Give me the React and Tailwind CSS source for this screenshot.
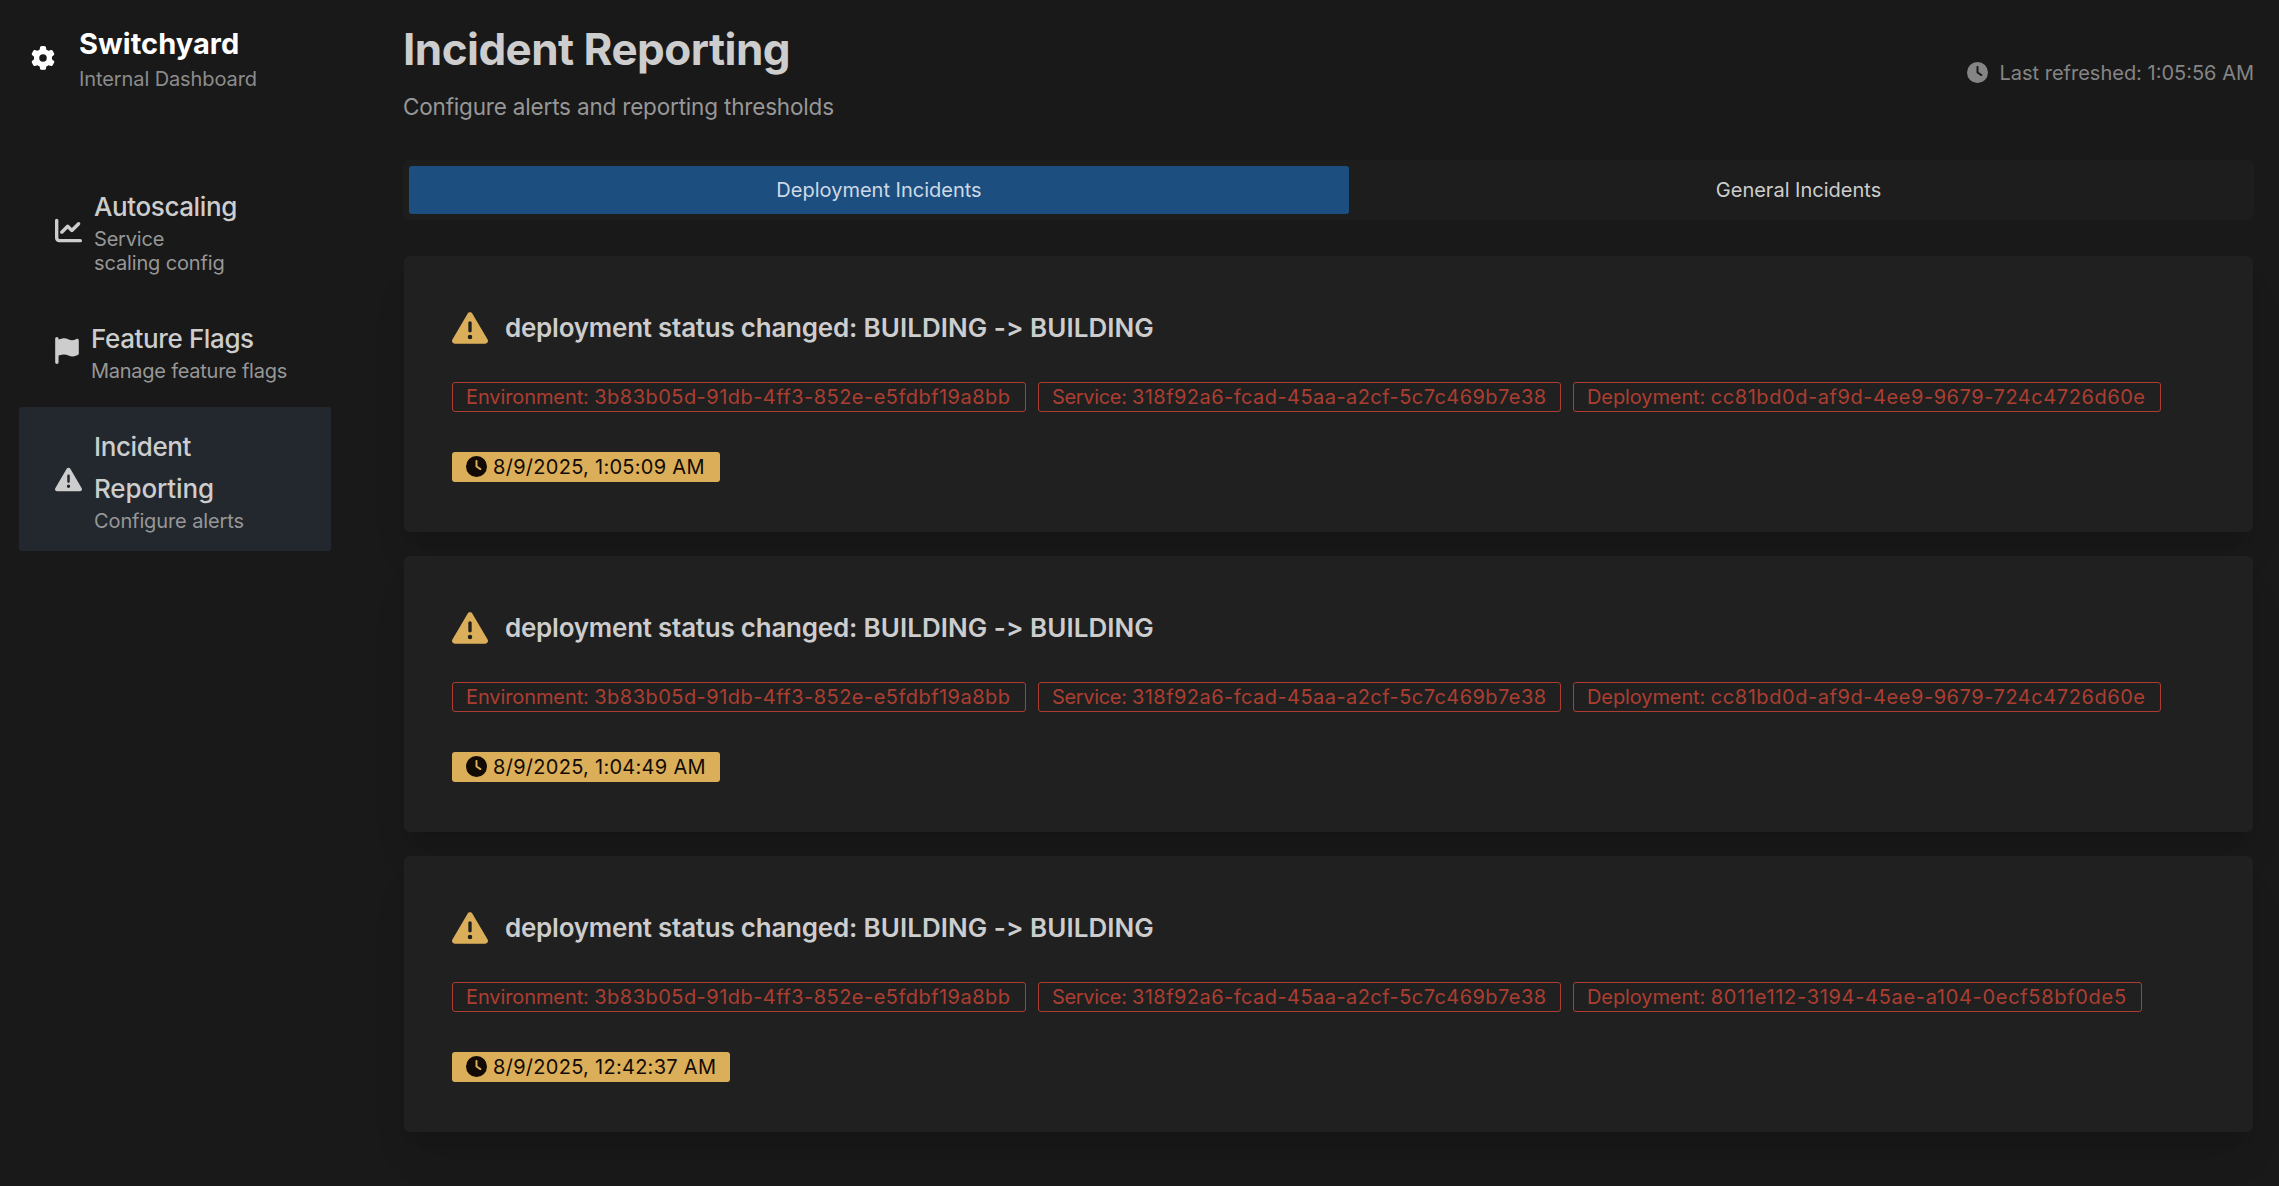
import React from "react";
import {
  FaChartLine,
  FaClock,
  FaFlag,
  FaGear,
  FaTriangleExclamation,
} from "react-icons/fa6";

const ENV = "3b83b05d-91db-4ff3-852e-e5fdbf19a8bb";
const SERVICE = "318f92a6-fcad-45aa-a2cf-5c7c469b7e38";

const incidents = [
  {
    deployment: "cc81bd0d-af9d-4ee9-9679-724c4726d60e",
    deploymentWidth: "w-[588px]",
    deploymentTracking: "tracking-[0.56px]",
    time: "8/9/2025, 1:05:09 AM",
    timeWidth: "w-[268px]",
  },
  {
    deployment: "cc81bd0d-af9d-4ee9-9679-724c4726d60e",
    deploymentWidth: "w-[588px]",
    deploymentTracking: "tracking-[0.56px]",
    time: "8/9/2025, 1:04:49 AM",
    timeWidth: "w-[268px]",
  },
  {
    deployment: "8011e112-3194-45ae-a104-0ecf58bf0de5",
    deploymentWidth: "w-[569px]",
    deploymentTracking: "tracking-[0.69px]",
    time: "8/9/2025, 12:42:37 AM",
    timeWidth: "w-[278px]",
  },
];

function NavItem({ icon, title, subtitle, active }) {
  return (
    <a
      className={
        "flex w-[312px] items-center gap-3 rounded-[3px] py-[18px] pl-9 text-[#cdcdcd] " +
        (active ? "bg-[#23282f]" : "")
      }
    >
      {icon}
      <div>
        {title.map(([text, tracking]) => (
          <div key={text} className={"h-[42px] text-[26px] leading-[44px] font-medium " + tracking}>
            {text}
          </div>
        ))}
        {subtitle.map(([text, tracking]) => (
          <div key={text} className={"text-[20px] leading-6 text-[#979797] " + tracking}>
            {text}
          </div>
        ))}
      </div>
    </a>
  );
}

function Chip({ label, labelTracking, value, width, tracking }) {
  return (
    <div
      className={
        "flex h-[30px] items-center rounded-[3px] border border-[#ac3e31] pl-[13px] text-[20px] whitespace-pre text-[#ac3e31] " +
        width
      }
    >
      <span className={labelTracking}>{label}: </span>
      <span className={tracking}>{value}</span>
    </div>
  );
}

function IncidentCard({ incident }) {
  return (
    <article className="h-[276px] rounded-[6px] bg-[#202020] p-12 shadow-[0_30px_38px_-8px_rgba(0,0,0,0.1),0_12px_15px_-9px_rgba(0,0,0,0.1)]">
      <div className="flex h-12 items-center gap-[17px]">
        <FaTriangleExclamation className="size-9 text-[#dbae5a]" />
        <h2 className="pb-[2px] text-[26px] font-semibold tracking-[0.04px] text-[#cdcdcd] [font-feature-settings:'calt'_0]">
          <span className="tracking-[-0.24px]">deployment status changed:</span> BUILDING -&gt;
          BUILDING
        </h2>
      </div>
      <div className="mt-[30px] flex gap-3">
        <Chip
          label="Environment"
          labelTracking="tracking-[-0.1px]"
          value={ENV}
          width="w-[574px]"
          tracking="tracking-[0.47px]"
        />
        <Chip
          label="Service"
          labelTracking="tracking-[-0.33px]"
          value={SERVICE}
          width="w-[523px]"
          tracking="tracking-[0.45px]"
        />
        <Chip
          label="Deployment"
          labelTracking="tracking-[-0.1px]"
          value={incident.deployment}
          width={incident.deploymentWidth}
          tracking={incident.deploymentTracking}
        />
      </div>
      <div
        className={
          "mt-10 flex h-[30px] items-center gap-[6px] rounded-[3px] bg-[#dbae5a] pl-[14px] text-[20px] tracking-[0.28px] whitespace-nowrap text-[#110b03] " +
          incident.timeWidth
        }
      >
        <FaClock className="mb-px size-[21px] shrink-0" />
        <span>{incident.time}</span>
      </div>
    </article>
  );
}

export default function App() {
  return (
    <div className="flex h-[1186px] w-[2279px] overflow-hidden bg-[#191919] font-['Inter',sans-serif] text-[#cdcdcd]">
      <aside className="w-[403px] shrink-0 pl-[19px]">
        <div className="flex h-[167px] pl-3 text-white">
          <FaGear className="mt-[46px] size-6" />
          <div className="ml-6 pt-[26px]">
            <div className="text-[29px] leading-9 font-bold tracking-[0.05px]">Switchyard</div>
            <div className="mt-[5px] text-[20px] leading-6 tracking-[-0.1px] text-[#8c8c8c]">
              Internal Dashboard
            </div>
          </div>
        </div>
        <nav className="flex flex-col gap-[6px]">
          <NavItem
            icon={<FaChartLine className="size-[27px]" />}
            title={[["Autoscaling", "tracking-[-0.4px]"]]}
            subtitle={[
              ["Service", "tracking-[-0.2px]"],
              ["scaling config", "tracking-[-0.14px]"],
            ]}
          />
          <NavItem
            icon={<FaFlag className="h-[27px] w-6" />}
            title={[["Feature Flags", "tracking-[-0.38px]"]]}
            subtitle={[["Manage feature flags", "tracking-[-0.25px]"]]}
          />
          <NavItem
            active
            icon={<FaTriangleExclamation className="size-[27px]" />}
            title={[
              ["Incident", "tracking-[-0.38px]"],
              ["Reporting", "tracking-[-0.14px]"],
            ]}
            subtitle={[["Configure alerts", "tracking-[-0.11px]"]]}
          />
        </nav>
      </aside>

      <main className="w-[1851px] shrink-0 pt-[19px]">
        <header className="flex h-[106px] items-center justify-between">
          <div>
            <h1 className="text-[44px] leading-[60px] font-bold tracking-[-0.54px]">
              Incident Reporting
            </h1>
            <p className="mt-[10px] text-[22.5px] leading-9 tracking-[-0.18px] text-[#979797]">
              Configure alerts and reporting thresholds
            </p>
          </div>
          <div className="flex items-center gap-[11px] pt-px text-[20px] text-[#858585]">
            <FaClock className="size-[21px]" />
            <span className="pt-px">Last refreshed: 1:05:56 AM</span>
          </div>
        </header>

        <div className="mt-[35px] flex h-[60px] rounded-[6px] bg-[#1d1d1d] p-[6px] text-[20px]">
          <button className="w-[940px] rounded-[3px] bg-[#1c4f80] text-[#cfd9e5]">
            Deployment Incidents
          </button>
          <button className="flex-1">General Incidents</button>
        </div>

        <section className="mt-9 mr-px ml-px flex flex-col gap-6">
          {incidents.map((incident) => (
            <IncidentCard key={incident.time} incident={incident} />
          ))}
        </section>
      </main>
    </div>
  );
}
